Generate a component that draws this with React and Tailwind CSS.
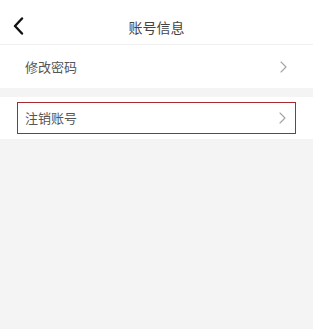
import React from 'react';

const Chevron = () => (
  <svg width="7" height="12" viewBox="0 0 7 12" fill="none" className="shrink-0">
    <path d="M1 1l5 5-5 5" stroke="#a3a3a3" strokeWidth="1.1" strokeLinecap="round" strokeLinejoin="round" />
  </svg>
);

export default function App() {
  return (
    <div className="min-h-[329px] w-full bg-[#f4f4f4] text-[#333]" style={{ fontFamily: '"Noto Sans CJK SC", "Noto Sans", sans-serif' }}>
      {/* 顶栏 */}
      <div className="relative flex h-[45px] items-center justify-center border-b border-[#efefef] bg-white pt-[9px]">
        <button className="absolute left-[12px] top-[17px]">
          <svg width="14" height="18" viewBox="0 0 14 18" fill="none">
            <path d="M10 1.5L3 9l7 7.5" stroke="#111" strokeWidth="2.4" strokeLinecap="round" strokeLinejoin="round" />
          </svg>
        </button>
        <span className="text-[14px] leading-none text-[#444]">账号信息</span>
      </div>

      <div className="flex h-[43px] items-center justify-between bg-white pl-[25px] pr-[26px]">
        <span className="text-[13px] text-[#555]">修改密码</span>
        <Chevron />
      </div>

      <div className="mt-[9px] bg-white px-[17px] py-[5px]">
        <div className="flex h-[32px] items-center justify-between border border-[#a82a2e] pl-[7px] pr-[9px]">
          <span className="text-[13px] text-[#555]">注销账号</span>
          <Chevron />
        </div>
      </div>
    </div>
  );
}
